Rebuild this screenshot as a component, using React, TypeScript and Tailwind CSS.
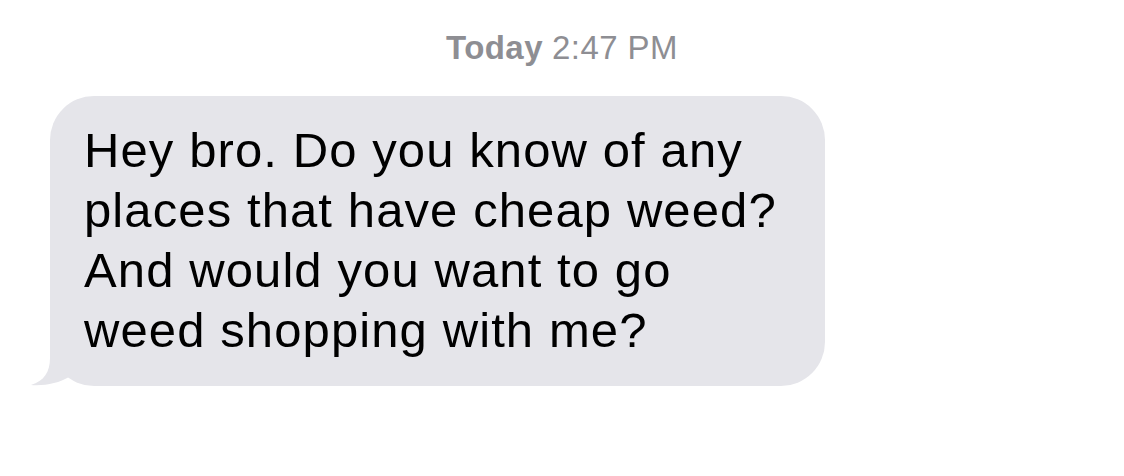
export default function App() {
  return (
    <div className="w-[1124px] h-[476px] bg-white overflow-hidden" style={{ fontFamily: '"Liberation Sans", Arial, sans-serif' }}>
      <div className="pt-[29px] flex justify-center text-[33px] leading-[38px] tracking-[0.45px] text-[#8e8e93]">
        <span className="font-bold">Today</span>
        <span className="ml-[9px]">2:47 PM</span>
      </div>
      <div className="mt-[29px] ml-[50px] relative w-[775px]">
        <svg className="absolute left-[-19px] bottom-0" width="60" height="44" viewBox="0 0 60 44">
          <path d="M19 0 L19 16 C19 30 13 39 0 43 C14 44 28 41 38 35 L38 0 Z" fill="#e5e5ea" />
        </svg>
        <div className="relative bg-[#e5e5ea] rounded-[44px] pl-[34px] pr-[20px] pt-[24px] pb-[26px] text-[49px] leading-[60px] tracking-[1.1px] text-black">
          Hey bro. Do you know of any<br />
          places that have cheap weed?<br />
          And would you want to go<br />
          weed shopping with me?
        </div>
      </div>
    </div>
  );
}
